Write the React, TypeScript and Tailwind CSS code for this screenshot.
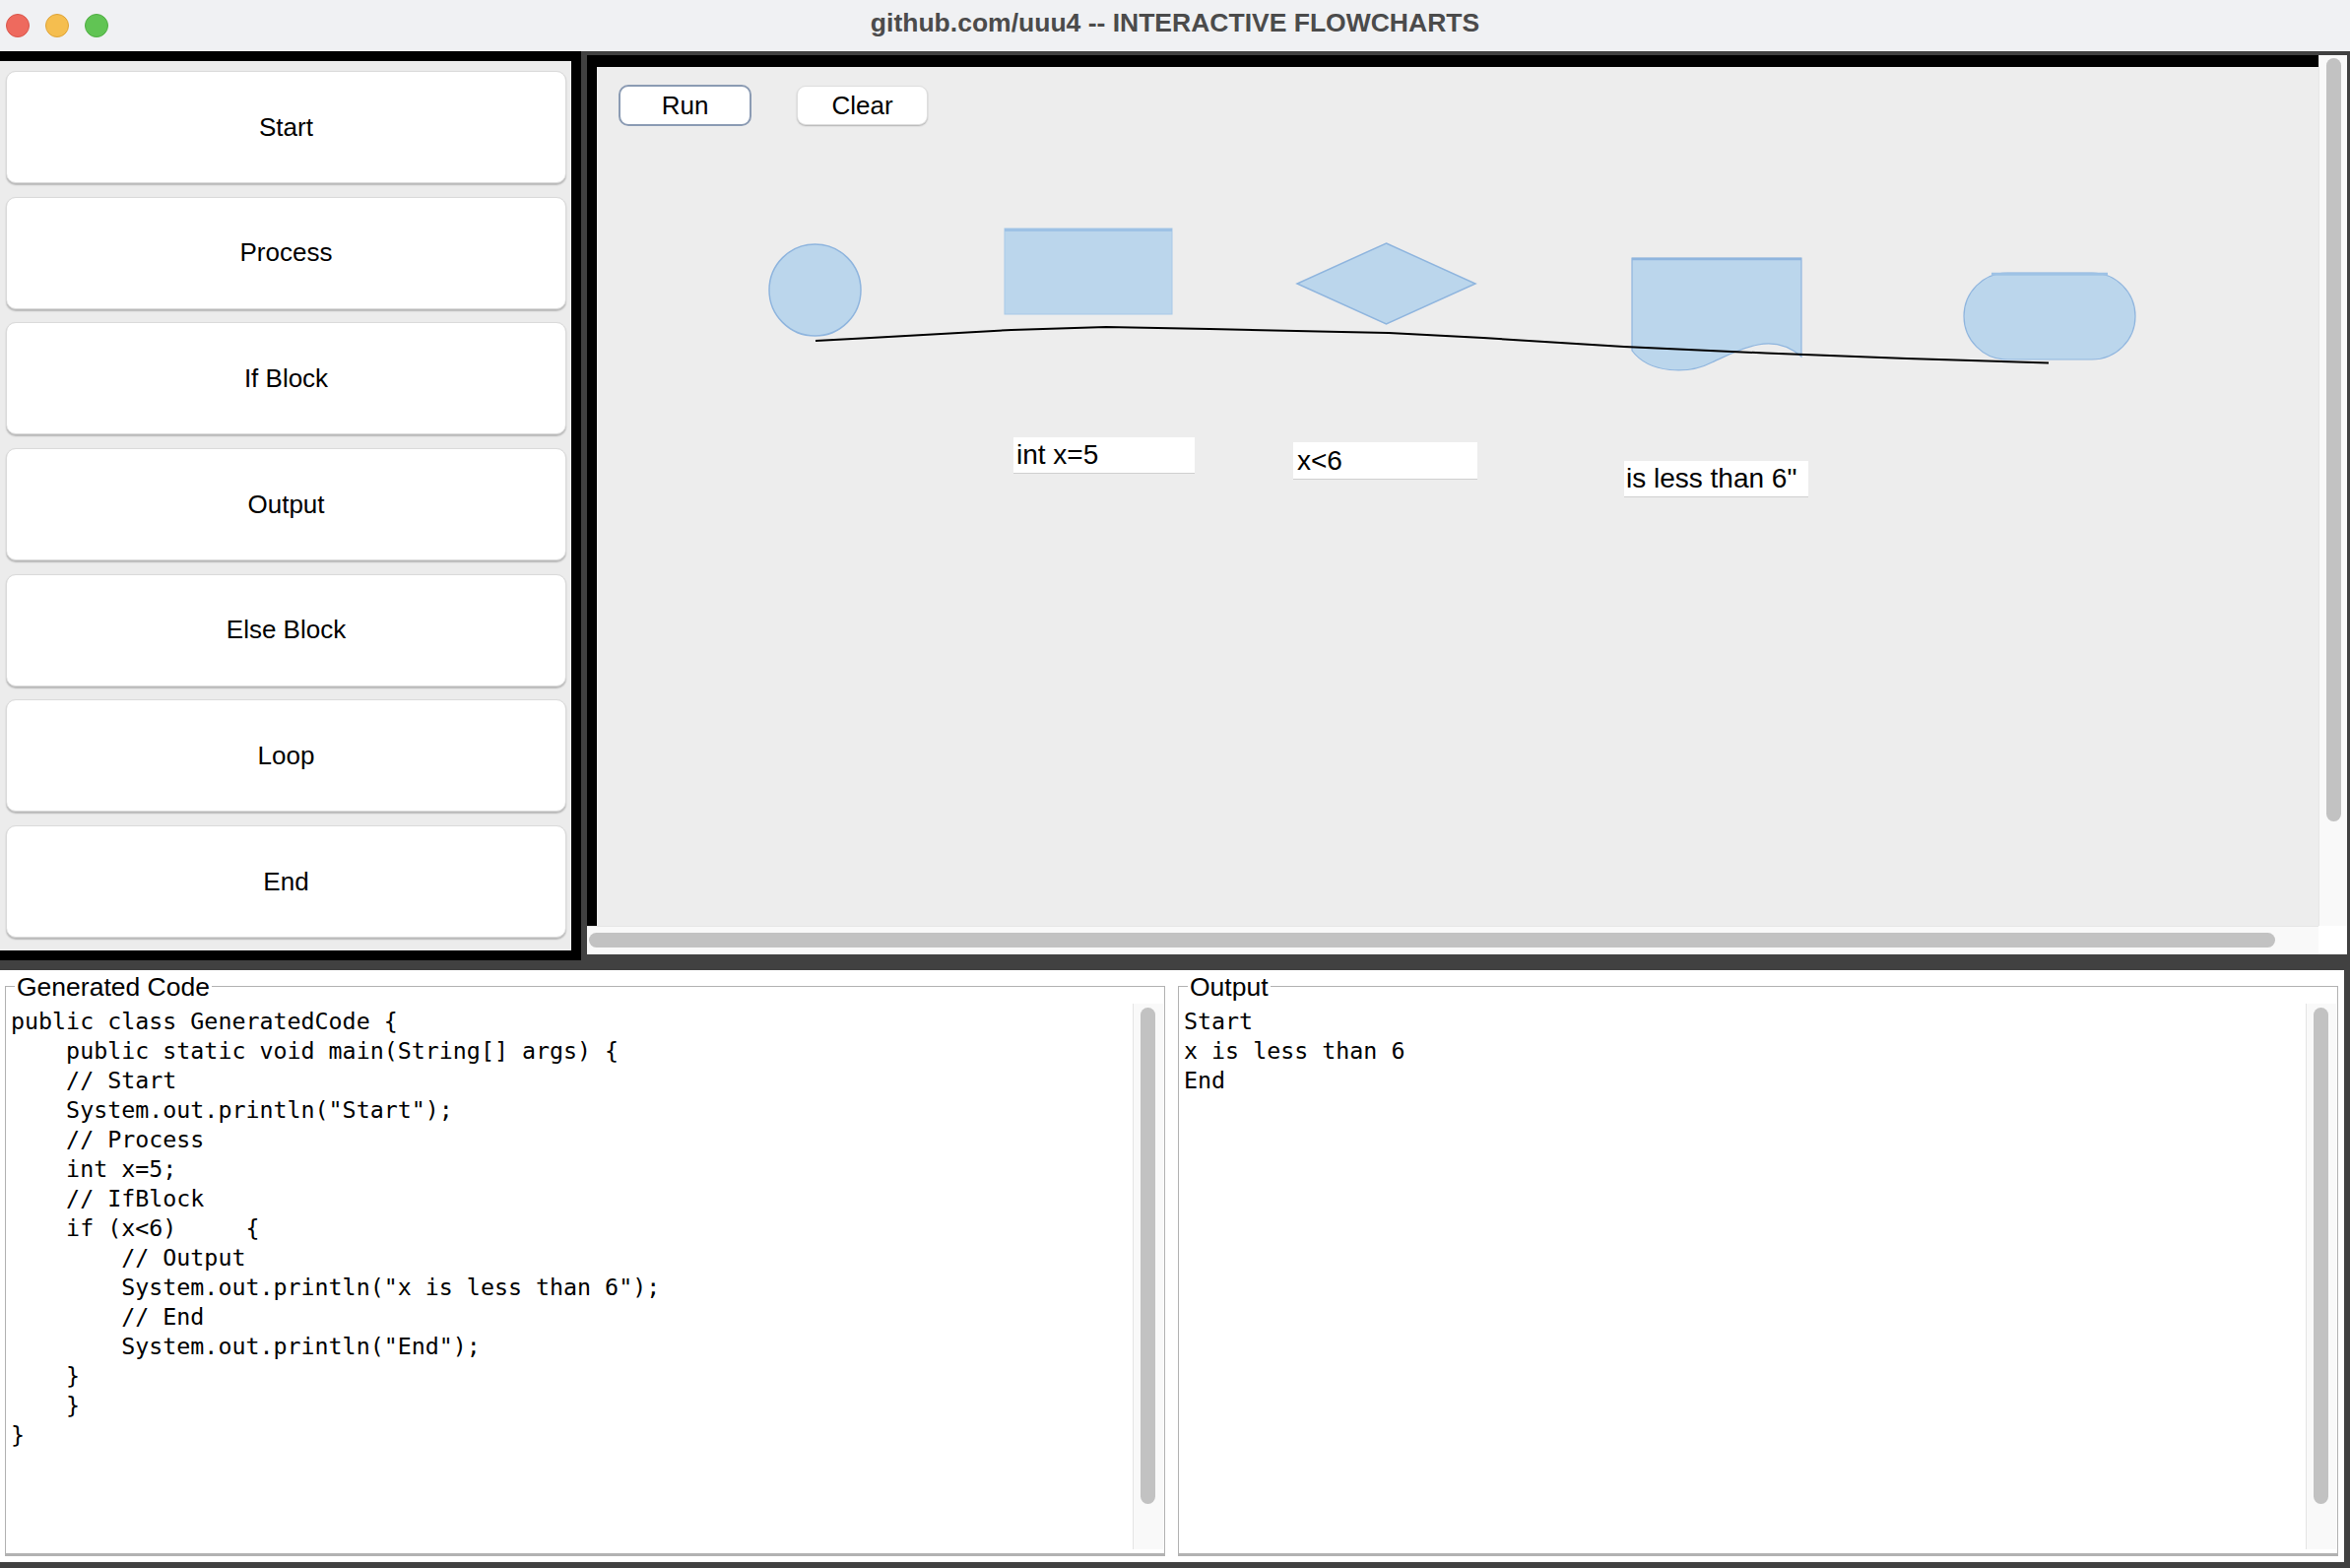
import React from "react";

const codeLines = [
  "public class GeneratedCode {",
  "    public static void main(String[] args) {",
  "    // Start",
  '    System.out.println("Start");',
  "    // Process",
  "    int x=5;",
  "    // IfBlock",
  "    if (x<6)     {",
  "        // Output",
  '        System.out.println("x is less than 6");',
  "        // End",
  '        System.out.println("End");',
  "    }",
  "    }",
  "}",
];

const outputLines = ["Start", "x is less than 6", "End"];

const paletteItems = ["Start", "Process", "If Block", "Output", "Else Block", "Loop", "End"];

const linePoints = [
  [828, 346],
  [884, 343],
  [1027, 335],
  [1123, 332],
  [1228, 334],
  [1362, 337],
  [1410, 338],
  [1506, 343],
  [1649, 352],
  [1793, 358.5],
  [1936, 364],
  [2080, 368.5],
];

function TextPane({ title, lines }: { title: string; lines: string[] }) {
  return (
    <div className="relative w-[1178px] h-[579px] border border-b-[3px] border-[#b2b2b2] flex pt-[17px] pb-[4px] pl-[5px] pr-[1px]">
      <span className="absolute left-[9px] top-[-15px] bg-white px-[2px] text-[26.5px] leading-[30px] text-black font-['Liberation_Sans',sans-serif]">
        {title}
      </span>
      <div className="flex-1 font-['DejaVu_Sans_Mono',monospace] text-[23.3px] leading-[30px] text-black whitespace-pre pt-[3px]">
        {lines.map((l, i) => (
          <div key={i}>{l}</div>
        ))}
      </div>
      <div className="w-[31px] bg-[#f9f9f9] border-l border-[#e4e4e4] pt-[4px] pl-[7px]">
        <div className="w-[15px] h-[504px] rounded-full bg-[#c2c2c2]" />
      </div>
    </div>
  );
}

export default function App() {
  return (
    <div className="w-[2386px] h-[1592px] bg-[#414141] flex flex-col overflow-hidden font-['Liberation_Sans',sans-serif]">
      {/* Title bar */}
      <div className="h-[52px] bg-[#f0f1f3] grid grid-cols-[1fr_auto_1fr] items-center">
        <div className="flex items-center gap-[16px] pl-[6px]">
          <div className="w-[24px] h-[24px] rounded-full bg-[#ee6a5e] border border-[#d9564b]" />
          <div className="w-[24px] h-[24px] rounded-full bg-[#f5be4f] border border-[#dea438]" />
          <div className="w-[24px] h-[24px] rounded-full bg-[#61c454] border border-[#4fae42]" />
        </div>
        <div className="text-[26.5px] font-bold text-[#4b4b4b] pb-[4px]">
          github.com/uuu4 -- INTERACTIVE FLOWCHARTS
        </div>
        <div />
      </div>

      {/* Top row */}
      <div className="flex h-[923px]">
        {/* Palette */}
        <div className="w-[590px] h-[923px] bg-[#ececec] border-t-[10px] border-r-[10px] border-b-[10px] border-black pt-[10px] pl-[6px] pr-[5px] flex flex-col gap-[13.7px]">
          {paletteItems.map((p) => (
            <div
              key={p}
              className="h-[114px] bg-white rounded-[10px] border border-[#dadada] shadow-[0_1.5px_1.5px_rgba(0,0,0,0.22)] flex items-center justify-center text-[26px] text-black"
            >
              {p}
            </div>
          ))}
        </div>

        {/* Canvas scroll pane */}
        <div className="ml-[6px] mt-[4px] w-[1787px] h-[913px] flex flex-col">
          <div className="flex h-[884px]">
            <div className="w-[1758px] h-[884px] overflow-hidden relative">
              <div className="relative w-[2000px] h-[1100px] border-l-[10px] border-t-[12px] border-black bg-[#ededed]">
                <div className="flex items-start gap-[46px] pl-[22px] pt-[18px]">
                  <div className="w-[135px] h-[42px] rounded-[10px] border-2 border-[#8b9bb3] bg-white flex items-center justify-center text-[26px] text-black">
                    Run
                  </div>
                  <div className="mt-[1px] w-[133px] h-[40px] rounded-[9px] border border-[#dedede] bg-white shadow-[0_1px_1.5px_rgba(0,0,0,0.25)] flex items-center justify-center text-[26px] text-black">
                    Clear
                  </div>
                </div>

                <svg
                  className="absolute left-0 top-0"
                  width={1748}
                  height={872}
                  viewBox="606 68 1748 872"
                >
                  {/* Start circle */}
                  <circle cx={827.5} cy={294.5} r={46.5} fill="#bbd6ec" stroke="#8fb5de" strokeWidth={1.5} />
                  {/* Process rect */}
                  <rect x={1020} y={232} width={170} height={87} fill="#bbd6ec" stroke="#a8c9e8" strokeWidth={1} />
                  <line x1={1020} y1={233.5} x2={1190} y2={233.5} stroke="#9ec2e5" strokeWidth={3} />
                  {/* Diamond */}
                  <polygon
                    points="1407.5,247 1498,288 1407.5,329 1317,288"
                    fill="#bbd6ec"
                    stroke="#8fb5de"
                    strokeWidth={1.5}
                  />
                  {/* Document (output) */}
                  <path
                    d="M1657 262 H1829 V362 C1815 350 1800 347 1785 350 C1765 354 1752 362 1738 368 C1715 380 1675 380 1657 356 Z"
                    fill="#bbd6ec"
                    stroke="#8fb5de"
                    strokeWidth={1.2}
                  />
                  <line x1={1657} y1={263} x2={1829} y2={263} stroke="#8fb5de" strokeWidth={2.5} />
                  {/* Terminator */}
                  <rect x={1994} y={277} width={174} height={88} rx={44} ry={44} fill="#bbd6ec" stroke="#8fb5de" strokeWidth={1.2} />
                  <path d="M2022 278.2 H2140" stroke="#9ec2e5" strokeWidth={3} fill="none" />
                  {/* Connector */}
                  <polyline
                    points={linePoints.map((p) => p.join(",")).join(" ")}
                    fill="none"
                    stroke="#000"
                    strokeWidth={2}
                    strokeLinejoin="round"
                  />
                </svg>

                <div className="absolute left-[423px] top-[376px] w-[184px] h-[37px] bg-white border-b border-[#cfcfcf] flex items-center pl-[3px] text-[28px] text-black whitespace-nowrap overflow-hidden">
                  int x=5
                </div>
                <div className="absolute left-[707px] top-[381px] w-[187px] h-[38px] bg-white border-b border-[#cfcfcf] flex items-center pl-[4px] text-[28px] text-black whitespace-nowrap overflow-hidden">
                  x&lt;6
                </div>
                <div className="absolute left-[1043px] top-[400px] w-[187px] h-[37px] bg-white border-b border-[#cfcfcf] flex items-center pl-[2px] text-[28px] text-black whitespace-nowrap overflow-hidden">
                  is less than 6"
                </div>
              </div>
            </div>
            {/* vertical scrollbar */}
            <div className="w-[29px] h-[884px] bg-[#f9f9f9] border-l border-[#e6e6e6] pt-[3px] pl-[7px]">
              <div className="w-[15px] h-[775px] rounded-full bg-[#c2c2c2]" />
            </div>
          </div>
          <div className="flex h-[29px]">
            <div className="w-[1758px] h-[29px] bg-[#f9f9f9] border-t border-[#e6e6e6] pt-[6px] pl-[2px]">
              <div className="w-[1712px] h-[15px] rounded-full bg-[#c2c2c2]" />
            </div>
            <div className="w-[29px] h-[29px] bg-white" />
          </div>
        </div>
      </div>

      {/* Bottom panel */}
      <div className="mt-[10px] w-[2380px] h-[601px] bg-white flex gap-[13px] pt-[16px] pl-[5px]">
        <TextPane title="Generated Code" lines={codeLines} />
        <TextPane title="Output" lines={outputLines} />
      </div>
    </div>
  );
}
